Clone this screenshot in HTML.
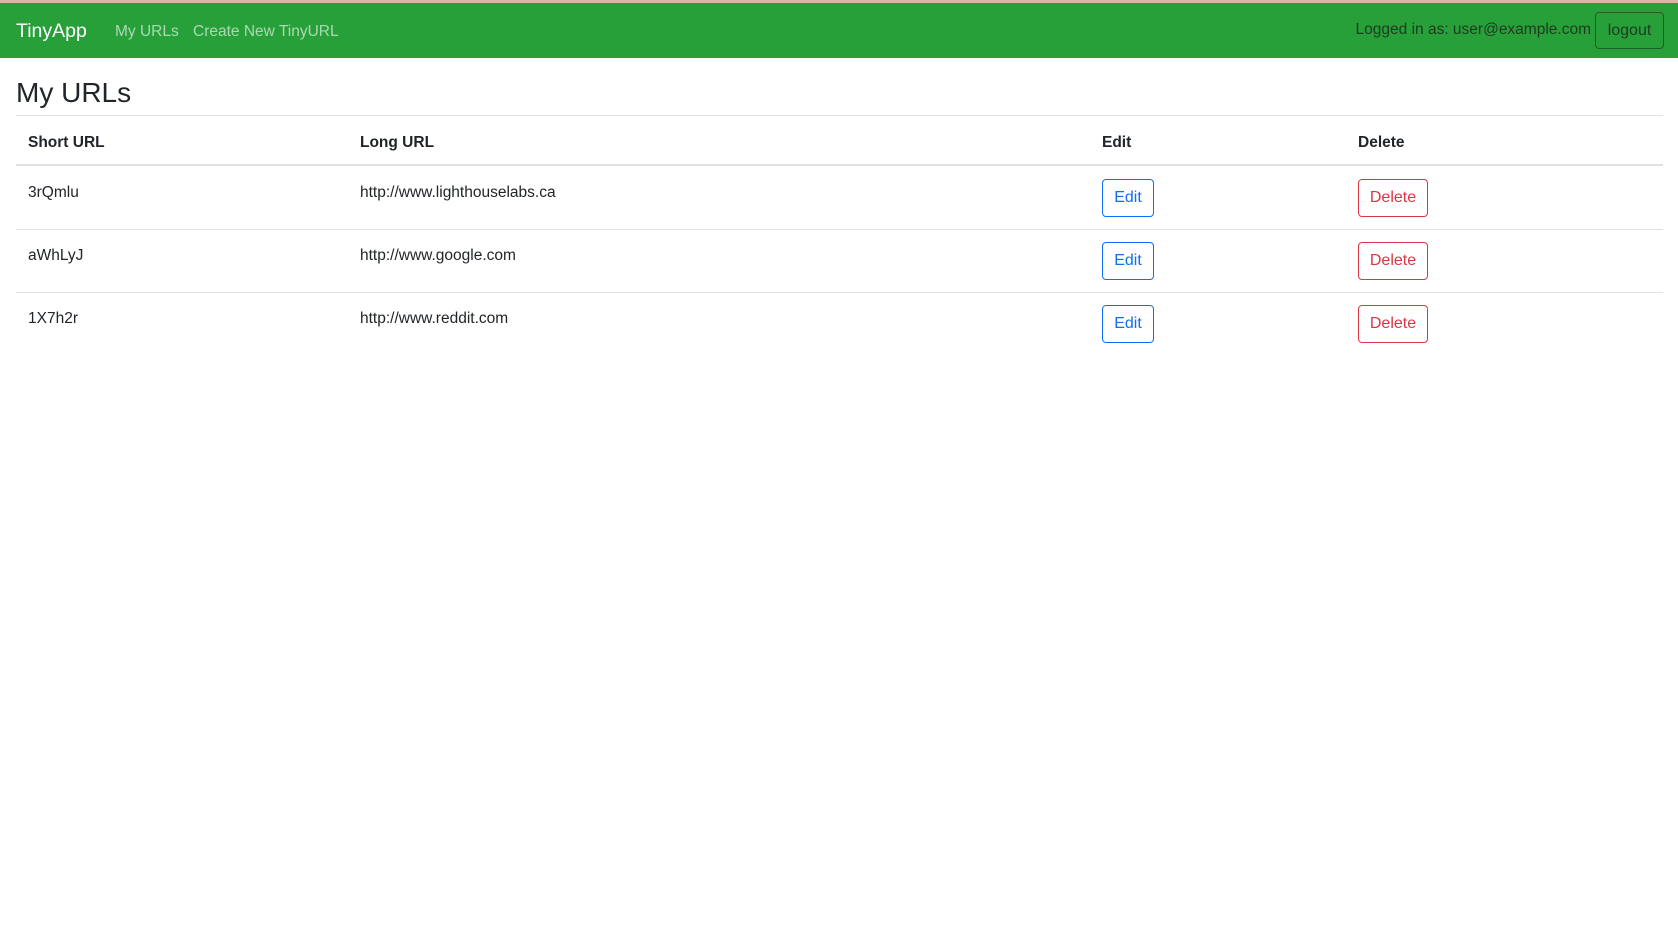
<!DOCTYPE html>
<html><head><style>
body{margin:0;width:1678px;height:939px;background:#fff;font-family:"Liberation Sans",sans-serif;color:#212529;position:relative;overflow:hidden}
.a{position:absolute;white-space:nowrap}
.top{position:absolute;left:0;top:0;width:1678px;height:3px;background:#d9b8a8}
.nav{position:absolute;left:0;top:3px;width:1678px;height:55px;background:#28a03a}
.btn{position:absolute;box-sizing:border-box;border:1px solid;border-radius:4px;font-size:16px;display:flex;align-items:center;justify-content:center}
.e{color:#0d6efd;border-color:#0d6efd;width:52px;height:38px;left:1102px}
.d{color:#dc3545;border-color:#dc3545;width:70px;height:38px;left:1358px}
.line{position:absolute;left:16px;width:1647px;background:#dee2e6}
.t{font-size:15.5px}
</style></head><body>
<div class="top"></div>
<div class="nav"></div>
<div class="a" style="left:16px;top:20px;font-size:19.5px;color:#fff">TinyApp</div>
<div class="a" style="left:115px;top:23px;font-size:15.5px;color:rgba(255,255,255,.6)">My URLs</div>
<div class="a" style="left:193px;top:23px;font-size:15.5px;color:rgba(255,255,255,.6)">Create New TinyURL</div>
<div class="a" style="right:87px;top:21px;font-size:15.5px;color:#1d3a20">Logged in as: user@example.com</div>
<div class="btn" style="left:1595px;top:12px;width:69px;height:37px;border-color:#1f5c28;color:#1d3a20;font-size:16px">logout</div>
<div class="a" style="left:16px;top:77px;font-size:28px;color:#212529">My URLs</div>
<div class="line" style="top:115px;height:1px"></div>
<div class="a t" style="left:28px;top:134px;font-weight:bold">Short URL</div>
<div class="a t" style="left:360px;top:134px;font-weight:bold">Long URL</div>
<div class="a t" style="left:1102px;top:134px;font-weight:bold">Edit</div>
<div class="a t" style="left:1358px;top:134px;font-weight:bold">Delete</div>
<div class="line" style="top:164px;height:2px"></div>
<div class="a t" style="left:28px;top:184px">3rQmlu</div>
<div class="a t" style="left:360px;top:184px">http://www.lighthouselabs.ca</div>
<div class="btn e" style="top:179px">Edit</div><div class="btn d" style="top:179px">Delete</div>
<div class="line" style="top:229px;height:1px"></div>
<div class="a t" style="left:28px;top:247px">aWhLyJ</div>
<div class="a t" style="left:360px;top:247px">http://www.google.com</div>
<div class="btn e" style="top:242px">Edit</div><div class="btn d" style="top:242px">Delete</div>
<div class="line" style="top:292px;height:1px"></div>
<div class="a t" style="left:28px;top:310px">1X7h2r</div>
<div class="a t" style="left:360px;top:310px">http://www.reddit.com</div>
<div class="btn e" style="top:305px">Edit</div><div class="btn d" style="top:305px">Delete</div>
</body></html>
